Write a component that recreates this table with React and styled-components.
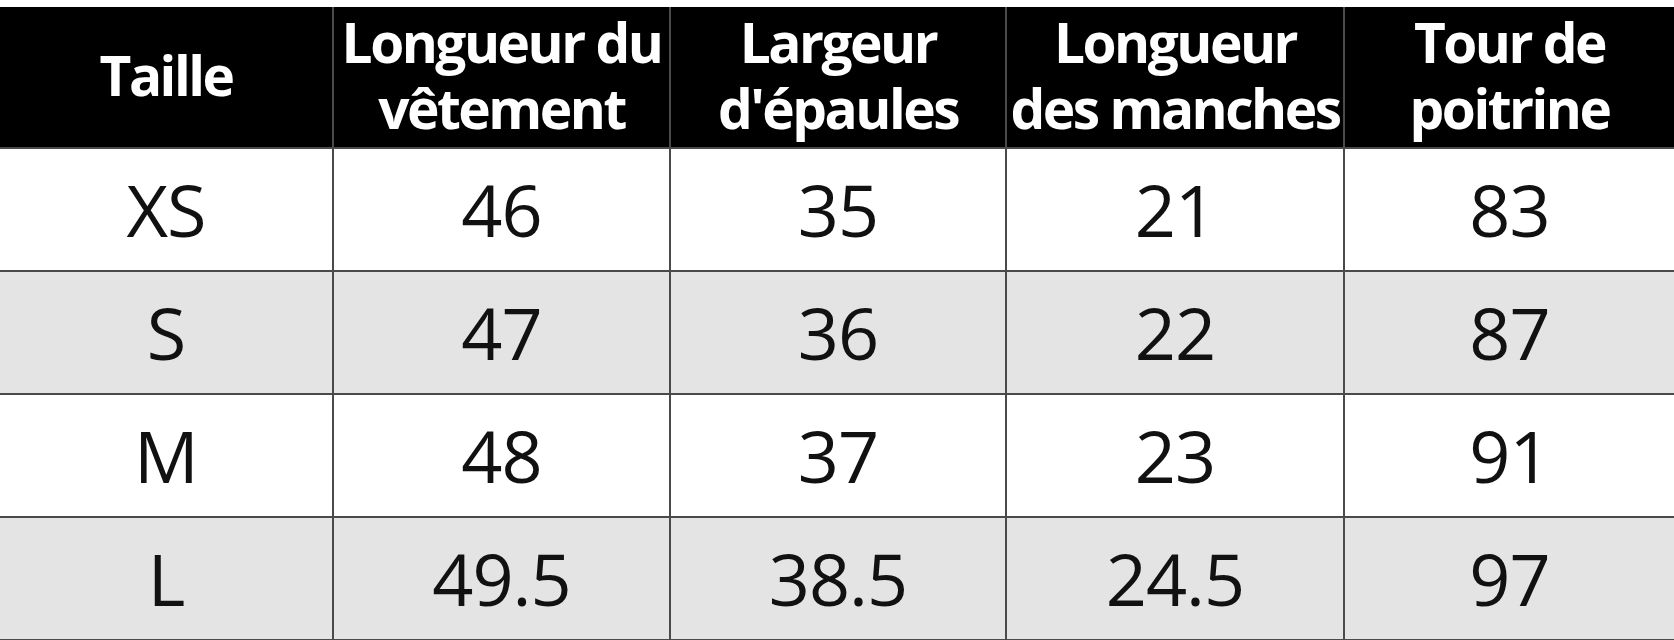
import React from "react";
import styled, { createGlobalStyle } from "styled-components";

const GlobalStyle = createGlobalStyle`
  html, body {
    margin: 0;
    padding: 0;
    background: #ffffff;
  }
  body {
    font-family: "Open Sans", "Noto Sans", "Liberation Sans", sans-serif;
  }
`;

const Page = styled.div`
  width: 1674px;
  height: 640px;
  padding-top: 7px;
  box-sizing: border-box;
  background: #ffffff;
  overflow: hidden;
`;

const Grid = styled.div`
  display: grid;
  grid-template-columns: 332px 335px 334px 336px 1fr;
  grid-template-rows: 140px repeat(4, 121px);
  gap: 2px;
  background: #4a4a4a;
  border-bottom: 2px solid #4a4a4a;
`;

const HeadCell = styled.div`
  background: #000000;
  color: #ffffff;
  display: flex;
  flex-direction: column;
  align-items: center;
  justify-content: center;
  text-align: center;
  font-weight: 700;
  font-size: 55px;
  letter-spacing: -2.5px;
  padding-bottom: 4px;
  overflow: hidden;
`;

const HeadLine = styled.span`
  display: block;
  height: 66px;
  line-height: 66px;
  white-space: nowrap;
`;

const Cell = styled.div`
  background: ${(p) => (p.$shaded ? "#e4e4e4" : "#ffffff")};
  color: #111111;
  display: flex;
  align-items: center;
  justify-content: center;
  font-size: 72px;
  font-weight: 400;
  line-height: 1;
  letter-spacing: -1px;
  padding-bottom: 2px;
`;

const headers = [
  ["Taille"],
  ["Longueur du", "vêtement"],
  ["Largeur", "d'épaules"],
  ["Longueur", "des manches"],
  ["Tour de", "poitrine"],
];

const rows = [
  ["XS", "46", "35", "21", "83"],
  ["S", "47", "36", "22", "87"],
  ["M", "48", "37", "23", "91"],
  ["L", "49.5", "38.5", "24.5", "97"],
];

export default function App() {
  return (
    <>
      <GlobalStyle />
      <Page>
        <Grid>
          {headers.map((lines) => (
            <HeadCell key={lines.join(" ")}>
              {lines.map((l) => (
                <HeadLine key={l}>{l}</HeadLine>
              ))}
            </HeadCell>
          ))}
          {rows.map((row, i) =>
            row.map((v, j) => (
              <Cell key={`${i}-${j}`} $shaded={i % 2 === 1}>
                {v}
              </Cell>
            ))
          )}
        </Grid>
      </Page>
    </>
  );
}
